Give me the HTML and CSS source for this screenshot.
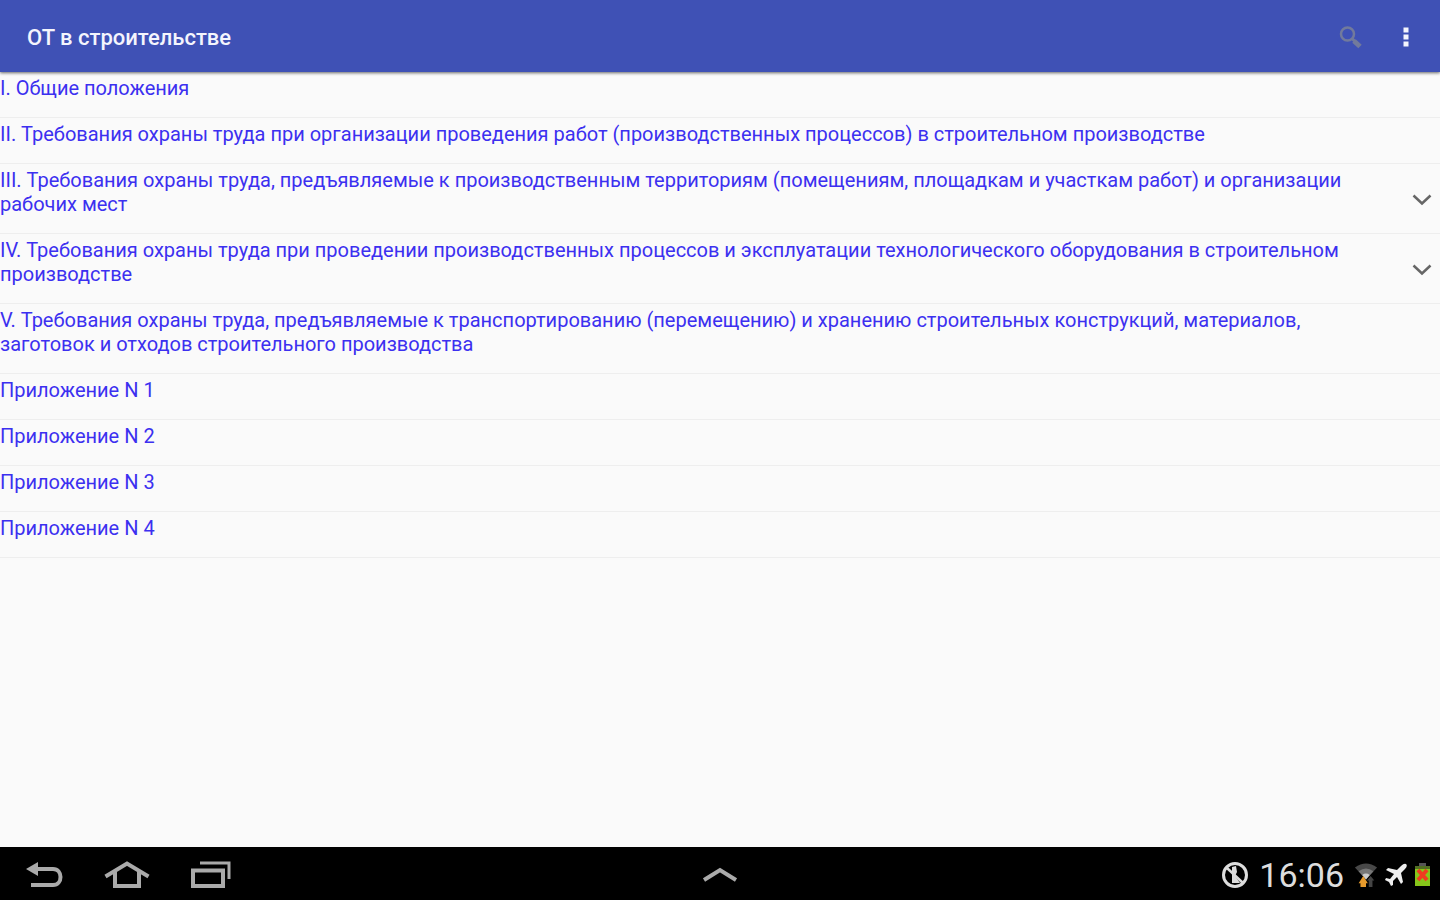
FILE: index.html
```html
<!DOCTYPE html>
<html lang="ru">
<head>
<meta charset="utf-8">
<meta name="viewport" content="width=device-width, initial-scale=1">
<title>ОТ в строительстве</title>
<link rel="stylesheet" href="styles.css">
</head>
<body>
<header class="app-bar">
  <h1 class="app-title">ОТ в строительстве</h1>
  <div class="app-actions">
    <button class="icon-button search" type="button" aria-label="Поиск">
      <svg width="24" height="24" viewBox="0 0 24 24"><circle cx="9.500" cy="9" r="6.500" fill="none" stroke="currentColor" stroke-width="2.500"/><path d="M14 13.500l3 3" stroke="currentColor" stroke-width="3"/><path d="M16 16l6 5.500" stroke="currentColor" stroke-width="5"/></svg>
    </button>
    <button class="icon-button more" type="button" aria-label="Меню">
      <svg width="8" height="22" viewBox="0 0 8 22"><path d="M1.500 1.500h5v5h-5zM1.500 8.500h5v5h-5zM1.500 15.500h5v5h-5z" fill="currentColor"/></svg>
    </button>
  </div>
</header>
<main class="contents">
  <ul class="sections">
    <li class="section"><a class="section-link" href="#s1">I. Общие положения</a></li>
    <li class="section"><a class="section-link" href="#s2">II. Требования охраны труда при организации проведения работ (производственных процессов) в строительном производстве</a></li>
    <li class="section"><a class="section-link" href="#s3">III. Требования охраны труда, предъявляемые к производственным территориям (помещениям, площадкам и участкам работ) и организации рабочих мест</a>
      <button class="expand" type="button" aria-label="Развернуть"><svg width="20" height="12" viewBox="0 0 20 12"><path d="M1.500 1.500L10 9.500l8.500-8" fill="none" stroke="currentColor" stroke-width="2.500"/></svg></button></li>
    <li class="section"><a class="section-link" href="#s4">IV. Требования охраны труда при проведении производственных процессов и эксплуатации технологического оборудования в строительном производстве</a>
      <button class="expand" type="button" aria-label="Развернуть"><svg width="20" height="12" viewBox="0 0 20 12"><path d="M1.500 1.500L10 9.500l8.500-8" fill="none" stroke="currentColor" stroke-width="2.500"/></svg></button></li>
    <li class="section"><a class="section-link" href="#s5">V. Требования охраны труда, предъявляемые к транспортированию (перемещению) и хранению строительных конструкций, материалов, заготовок и отходов строительного производства</a></li>
    <li class="section"><a class="section-link" href="#a1">Приложение N 1</a></li>
    <li class="section"><a class="section-link" href="#a2">Приложение N 2</a></li>
    <li class="section"><a class="section-link" href="#a3">Приложение N 3</a></li>
    <li class="section"><a class="section-link" href="#a4">Приложение N 4</a></li>
  </ul>
</main>
<footer class="system-bar">
  <div class="nav-keys">
    <button class="key" type="button" aria-label="Назад"><svg width="38" height="28" viewBox="0 0 38 28"><path d="M10 8h17c10 0 10 16 0 16H5" fill="none" stroke="currentColor" stroke-width="4"/><path d="M0 8L12 1v14z" fill="currentColor"/></svg></button>
    <button class="key" type="button" aria-label="Домой"><svg width="46" height="28" viewBox="0 0 46 28"><path d="M1.500 15.500L23 2.500l21.500 13M11 11v14h24V11" fill="none" stroke="currentColor" stroke-width="4"/></svg></button>
    <button class="key" type="button" aria-label="Недавние приложения"><svg width="42" height="28" viewBox="0 0 42 28"><path d="M3 9.500h30V25H3z" fill="none" stroke="currentColor" stroke-width="4"/><path d="M10 2h29v16" fill="none" stroke="currentColor" stroke-width="3"/></svg></button>
  </div>
  <button class="key" type="button" aria-label="Панель приложений"><svg width="36" height="18" viewBox="0 0 36 18"><path d="M2 14L18 4l16 10" fill="none" stroke="currentColor" stroke-width="4"/></svg></button>
  <div class="status">
    <svg class="blocked" width="28" height="28" viewBox="0 0 28 28"><circle cx="14" cy="14" r="11.500" fill="none" stroke="currentColor" stroke-width="3"/><path d="M6 7l16 15" stroke="currentColor" stroke-width="2.500"/><path d="M11 6l4-1 1 6-2 4 5 7h-8V13z" fill="currentColor"/></svg>
    <time class="clock">16:06</time>
    <div class="status-icons">
      <svg width="24" height="28" viewBox="0 0 26 28"><path d="M1 6Q13-3 25 6L13 19z" fill="#484848"/><path d="M5 10q8-6 16 0l-8 9z" fill="#777"/><path d="M9 14q4-3 8 0l-4 5z" fill="#ccc"/><path d="M10 15l5 8h-2v4H7v-4H5z" fill="#e69a2c"/><path d="M16 27v-7h-2l4-5 4 5h-2v7z" fill="#444"/></svg>
      <svg width="22" height="24" viewBox="0 0 22 24"><path d="M21 1q-2-1-5 2l-4 4L3 5 1 7l8 4-4 5-4-1-1 2 4 2 2 4 2-1v-4l4-4 4 7 2-2-2-9 4-4q3-3 1-5z" fill="#eee"/></svg>
      <svg width="17" height="24" viewBox="0 0 17 24"><path d="M5 0h7v3H5z" fill="#555"/><path d="M1 3h15v3H1z" fill="#527022"/><path d="M1 6h15v17H1z" fill="#86c51a"/><path d="M4 7l9 10M13 7L4 17" stroke="#f03a20" stroke-width="4"/></svg>
    </div>
  </div>
</footer>
</body>
</html>
```
FILE: styles.css
```css
* {
  box-sizing: border-box;
}

body {
  display: flex;
  flex-direction: column;
  min-height: 100vh;
  margin: 0;
  background: #fafafa;
  font-family: Roboto, "Noto Sans", sans-serif;
}

button {
  display: flex;
  align-items: center;
  justify-content: center;
  padding: 0;
  border: 0;
  background: none;
  color: inherit;
}

.app-bar {
  display: flex;
  align-items: center;
  justify-content: space-between;
  height: 72px;
  padding: 0 16px 0 27px;
  background: #3f51b5;
  box-shadow: 0 1px 3px rgba(0, 0, 0, 0.6);
  color: #f4f5fd;
}

.app-title {
  margin: 0;
  padding-top: 4px;
  font-size: 22px;
  font-weight: 500;
  line-height: 28px;
}

.app-actions {
  display: flex;
  gap: 20px;
  padding-top: 2px;
}

.icon-button {
  height: 48px;
  min-width: 36px;
}

.search {
  color: #727a9c;
}

.sections {
  margin: 0;
  padding: 0;
  list-style: none;
}

.section {
  display: flex;
  align-items: center;
  justify-content: space-between;
  padding: 4px 8px 17px 0;
  border-bottom: 1px solid #eee;
}

.section-link {
  max-width: 1368px;
  color: #3c30f0;
  font-size: 20px;
  line-height: 24px;
  text-decoration: none;
}

.expand {
  flex: none;
  padding-top: 16px;
  color: #666;
}

.system-bar {
  display: grid;
  grid-template-columns: 1fr auto 1fr;
  align-items: center;
  height: 53px;
  margin-top: auto;
  padding: 2px 9px 0;
  background: #000;
  color: #aaa;
}

.nav-keys {
  display: flex;
  gap: 40px;
  padding-left: 17px;
}

.status {
  display: flex;
  align-items: center;
  justify-content: flex-end;
  gap: 10px;
  color: #ddd;
}

.clock {
  font-size: 34px;
  line-height: 40px;
}

.status-icons {
  display: flex;
  align-items: center;
  gap: 7px;
}
```
